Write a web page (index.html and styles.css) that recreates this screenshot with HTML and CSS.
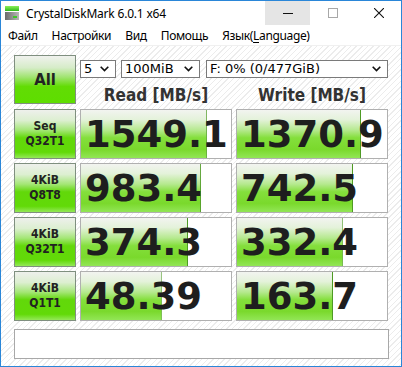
FILE: index.html
```html
<!DOCTYPE html>
<html lang="ru">
<head>
<meta charset="utf-8">
<title>CrystalDiskMark 6.0.1 x64</title>
<link rel="stylesheet" href="styles.css">
</head>
<body>
<div class="window">
  <div class="titlebar">
    <svg class="appicon" width="16" height="16" viewBox="0 0 16 16">
      <defs>
        <linearGradient id="g1" x1="0" y1="0" x2="0" y2="1">
          <stop offset="0" stop-color="#8af05a"/>
          <stop offset="1" stop-color="#2fb81a"/>
        </linearGradient>
        <linearGradient id="g2" x1="0" y1="0" x2="1" y2="0">
          <stop offset="0" stop-color="#6a6a6a"/>
          <stop offset="1" stop-color="#b8b8b8"/>
        </linearGradient>
      </defs>
      <rect x="1" y="1" width="14" height="5" fill="url(#g1)"/>
      <rect x="1" y="7" width="14" height="8" fill="url(#g2)"/>
      <rect x="9" y="11" width="4" height="2" fill="#3ec62a"/>
    </svg>
    <span class="title">CrystalDiskMark 6.0.1 x64</span>
    <div class="controls">
      <div class="ctl min">
        <svg width="10" height="10" viewBox="0 0 10 10"><path d="M0 5.5H10" stroke="#111" stroke-width="1"/></svg>
      </div>
      <div class="ctl max">
        <svg width="10" height="10" viewBox="0 0 10 10"><rect x="0.5" y="0.5" width="9" height="9" fill="none" stroke="#a8a8a8" stroke-width="1"/></svg>
      </div>
      <div class="ctl close">
        <svg width="10" height="10" viewBox="0 0 10 10"><path d="M0 0L10 10M10 0L0 10" stroke="#111" stroke-width="1.1"/></svg>
      </div>
    </div>
  </div>
  <div class="menubar">
    <span class="menuitem">Файл</span>
    <span class="menuitem">Настройки</span>
    <span class="menuitem">Вид</span>
    <span class="menuitem">Помощь</span>
    <span class="menuitem">Язык(<u>L</u>anguage)</span>
  </div>
  <div class="content">
    <div class="top">
      <div class="btn all">All</div>
      <div class="selects">
        <div class="select s1"><span>5</span><svg class="chev" width="9" height="6" viewBox="0 0 9 6"><path d="M0.7 0.7L4.5 4.6L8.3 0.7" fill="none" stroke="#111" stroke-width="1.6"/></svg></div>
        <div class="select s2"><span>100MiB</span><svg class="chev" width="9" height="6" viewBox="0 0 9 6"><path d="M0.7 0.7L4.5 4.6L8.3 0.7" fill="none" stroke="#111" stroke-width="1.6"/></svg></div>
        <div class="select s3"><span>F: 0% (0/477GiB)</span><svg class="chev" width="9" height="6" viewBox="0 0 9 6"><path d="M0.7 0.7L4.5 4.6L8.3 0.7" fill="none" stroke="#111" stroke-width="1.6"/></svg></div>
      </div>
      <div class="head">Read [MB/s]</div>
      <div class="head">Write [MB/s]</div>
    </div>
    <div class="rows">
      <div class="btn label">Seq<br>Q32T1</div>
      <div class="cell" style="--w:83.8%">1549.1</div>
      <div class="cell" style="--w:82.7%">1370.9</div>

      <div class="btn label">4KiB<br>Q8T8</div>
      <div class="cell" style="--w:79.9%">983.4</div>
      <div class="cell" style="--w:77.4%">742.5</div>

      <div class="btn label">4KiB<br>Q32T1</div>
      <div class="cell" style="--w:71.5%">374.3</div>
      <div class="cell" style="--w:70.4%">332.4</div>

      <div class="btn label">4KiB<br>Q1T1</div>
      <div class="cell" style="--w:53.7%">48.39</div>
      <div class="cell" style="--w:64.3%">163.7</div>
    </div>
    <div class="status"></div>
  </div>
</div>
</body>
</html>
```

FILE: styles.css
```css
* { box-sizing: border-box; }
html, body { margin: 0; padding: 0; }
body { width: 402px; height: 367px; overflow: hidden; background: #fff; }

.window {
  width: 402px;
  height: 367px;
  border: 1px solid #2a86d8;
  display: flex;
  flex-direction: column;
  background: #fff;
}

.titlebar {
  height: 24px;
  display: flex;
  align-items: center;
  background: #fff;
  font-family: "Noto Sans", "DejaVu Sans", sans-serif;
  font-size: 12px;
  color: #000;
}
.appicon { margin-left: 3px; margin-right: 6px; flex: none; }
.title { letter-spacing: -0.2px; }
.controls { margin-left: auto; display: flex; height: 100%; }
.ctl { height: 100%; display: flex; align-items: center; justify-content: center; }
.ctl.min { width: 45px; background: #e5e5e5; }
.ctl.max { width: 46px; }
.ctl.close { width: 45px; }

.menubar {
  height: 21px;
  display: flex;
  align-items: center;
  padding-left: 7px;
  gap: 14px;
  font-family: "Noto Sans", "DejaVu Sans", sans-serif;
  font-size: 12px;
  color: #000;
  border-bottom: 1px solid #f0f0f0;
  background: #fff;
}
.menuitem { letter-spacing: -0.35px; }
.menuitem u { text-decoration-thickness: 1px; text-underline-offset: 2px; }

.content {
  flex: 1;
  padding: 9px 12px 0 13px;
  background-color: #fff;
  background-image: repeating-linear-gradient(135deg, #ffffff 0px, #ffffff 3px, #ececec 3px, #ececec 4px);
}

.top {
  display: grid;
  grid-template-columns: 62px 152px 152px;
  grid-template-rows: 27px 22px;
  column-gap: 4px;
}

.btn {
  border: 1px solid #7f8f7f;
  display: flex;
  align-items: center;
  justify-content: center;
  text-align: center;
  font-family: "DejaVu Sans Condensed", "DejaVu Sans", sans-serif;
  font-weight: bold;
  color: #222;
  background: linear-gradient(to bottom, #eef0ec 0%, #dcefd0 22%, #a4e676 42%, #62d80a 58%, #62da08 88%, #94e858 100%);
}
.all {
  grid-row: 1 / 3;
  grid-column: 1;
  font-size: 16.5px;
  background: linear-gradient(to bottom, #f0f2ee 0%, #d6ecc8 25%, #a0e470 45%, #62dc04 65%, #5ede00 100%);
}

.selects {
  grid-row: 1;
  grid-column: 2 / 4;
  display: flex;
  padding-top: 5px;
}
.select {
  height: 18px;
  border: 1px solid #7a7a7a;
  background: #fff;
  display: flex;
  align-items: center;
  padding-left: 3px;
  padding-right: 6px;
  font-family: "DejaVu Sans", sans-serif;
  font-size: 13px;
  color: #000;
}
.select span { line-height: 16px; }
.select .chev { margin-left: auto; flex: none; }
.s1 { width: 36px; }
.s2 { width: 79px; margin-left: 5px; }
.s3 { width: 182px; margin-left: 6px; }

.head {
  grid-row: 2;
  text-align: center;
  font-family: "DejaVu Sans Condensed", "DejaVu Sans", sans-serif;
  font-weight: bold;
  font-size: 17px;
  line-height: 18px;
  padding-top: 4px;
  color: #333;
}

.rows {
  margin-top: 5px;
  display: grid;
  grid-template-columns: 62px 152px 152px;
  grid-auto-rows: 50px;
  column-gap: 4px;
  row-gap: 4px;
}
.label {
  font-size: 12px;
  line-height: 15px;
}

.cell {
  border: 1px solid #b0b0b0;
  background-color: #fff;
  background-image:
    linear-gradient(to right, transparent calc(100% - 1px), #4e9a24 calc(100% - 1px)),
    linear-gradient(to bottom, #f2f4f0 0%, #e4f2da 20%, #b5e98e 42%, #84df3c 58%, #7ad92c 82%, #92e656 100%);
  background-size: var(--w) 100%, var(--w) 100%;
  background-repeat: no-repeat;
  font-family: "DejaVu Sans", sans-serif;
  font-weight: bold;
  font-size: 37px;
  line-height: 48px;
  padding: 1px 0 0 4px;
  color: #1e1e1e;
  white-space: nowrap;
  overflow: hidden;
}

.status {
  margin-top: 8px;
  height: 30px;
  border: 1px solid #a8a8a8;
  background: #fff;
}
```
